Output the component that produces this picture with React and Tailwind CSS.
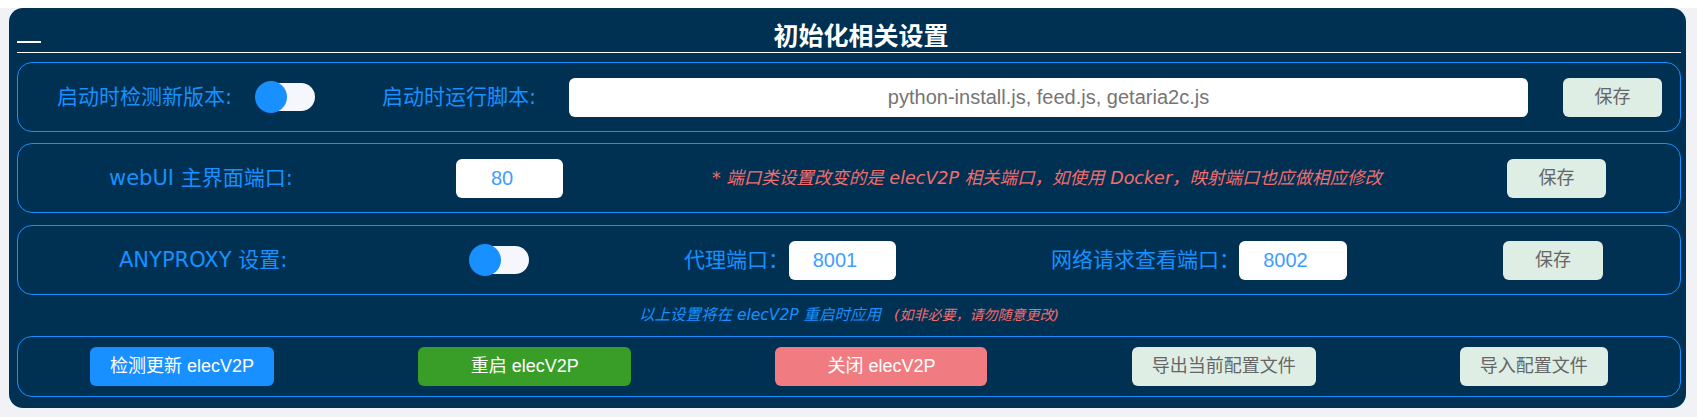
import React from "react";

const LABEL = "font-['DejaVu_Sans','Noto_Sans_CJK_SC',sans-serif] text-[21px] text-[#1890ff] whitespace-nowrap leading-none";
const UI = "font-['Liberation_Sans','Noto_Sans_CJK_SC',sans-serif]";

function Toggle({ className }) {
    return (
        <div className={`flex items-center w-[56px] h-[28px] rounded-full bg-[#f5f7fc] shrink-0 ${className}`}>
            <div className="w-[32px] h-[32px] -ml-[4px] rounded-full bg-[#1890ff] shrink-0"></div>
        </div>
    );
}

function SaveButton({ className }) {
    return (
        <button className={`${UI} h-[39px] rounded-[6px] bg-[#dfeee5] text-[18px] text-[#666] shrink-0 ${className}`}>
            保存
        </button>
    );
}

function NumInput({ value, className }) {
    return (
        <input
            defaultValue={value}
            className={`${UI} h-[39px] pr-[15px] rounded-[6px] bg-white text-center text-[20px] text-[#409eff] outline-none shrink-0 ${className}`}
        />
    );
}

const ROW = "flex items-center h-[70px] border border-[#1890ff] rounded-[15px]";

export default function App() {
    return (
        <div className="min-h-screen bg-[#f0f2f5]">
            <div className="h-[8px] bg-white"></div>
            <div className="pl-[9px] pr-[11px]">
                <div className="bg-[#003153] rounded-[14px] pl-2 pr-[5px] pb-[11px]">
                    {/* header */}
                    <div className="flex items-end border-b border-white pt-[10px] pb-[2px]">
                        <div className="w-[24px] h-[2px] bg-white mb-[7px]"></div>
                        <h2 className="flex-1 text-center text-white font-bold text-[25px] leading-[32px] font-['Noto_Sans_CJK_SC',sans-serif]">
                            初始化相关设置
                        </h2>
                    </div>

                    <div className="mt-[9px] flex flex-col">
                        {/* row 1 */}
                        <div className={ROW}>
                            <span className={`${LABEL} ml-[39px] w-[173px]`}>启动时检测新版本:</span>
                            <Toggle className="ml-[29px]" />
                            <span className={`${LABEL} ml-[67px] w-[153px]`}>启动时运行脚本:</span>
                            <input
                                placeholder="python-install.js, feed.js, getaria2c.js"
                                className={`${UI} ml-[34px] w-[959px] h-[39px] rounded-[6px] bg-white text-center text-[20px] text-[#606266] placeholder:text-[#757575] outline-none`}
                            />
                            <SaveButton className="ml-[35px] w-[99px]" />
                        </div>

                        {/* row 2 */}
                        <div className={`${ROW} mt-[11px]`}>
                            <span className={`${LABEL} ml-[91px] w-[183px]`}>webUI 主界面端口:</span>
                            <NumInput value="80" className="ml-[164px] w-[107px]" />
                            <span className="ml-[149px] w-[668px] whitespace-nowrap italic text-[17.5px] text-[#f56c6c] font-['DejaVu_Sans','Noto_Sans_CJK_SC',sans-serif]">
                                * 端口类设置改变的是 elecV2P 相关端口，如使用 Docker，映射端口也应做相应修改
                            </span>
                            <SaveButton className="ml-[127px] w-[99px]" />
                        </div>

                        {/* row 3 */}
                        <div className={`${ROW} mt-[12px]`}>
                            <span className={`${LABEL} ml-[101px] w-[171px]`}>ANYPROXY 设置:</span>
                            <Toggle className="ml-[183px]" />
                            <span className={`${LABEL} ml-[155px] w-[95px]`}>代理端口：</span>
                            <NumInput value="8001" className="ml-[10px] w-[107px]" />
                            <span className={`${LABEL} ml-[155px] w-[176px]`}>网络请求查看端口：</span>
                            <NumInput value="8002" className="ml-[12px] w-[108px]" />
                            <SaveButton className="ml-[156px] w-[100px]" />
                        </div>

                        {/* note */}
                        <div className="h-[41px] flex items-center justify-center italic whitespace-nowrap font-['DejaVu_Sans','Noto_Sans_CJK_SC',sans-serif]">
                            <span className="text-[15.5px] text-[#1890ff]">以上设置将在 elecV2P 重启时应用</span>
                            <span className="ml-[13px] text-[14px] text-[#f56c6c]">(如非必要，请勿随意更改)</span>
                        </div>

                        {/* actions */}
                        <div className="flex items-center justify-around h-[61px] border border-[#1890ff] rounded-[15px]">
                            <button className={`${UI} w-[184px] h-[39px] rounded-[6px] bg-[#1890ff] text-white text-[18px]`}>检测更新 elecV2P</button>
                            <button className={`${UI} w-[213px] h-[39px] rounded-[6px] bg-[#389e28] text-white text-[18px]`}>重启 elecV2P</button>
                            <button className={`${UI} w-[212px] h-[39px] rounded-[6px] bg-[#f07c82] text-white text-[18px]`}>关闭 elecV2P</button>
                            <button className={`${UI} w-[184px] h-[39px] rounded-[6px] bg-[#dfeee5] text-[#666] text-[18px]`}>导出当前配置文件</button>
                            <button className={`${UI} w-[148px] h-[39px] rounded-[6px] bg-[#dfeee5] text-[#666] text-[18px]`}>导入配置文件</button>
                        </div>
                    </div>
                </div>
            </div>
        </div>
    );
}
